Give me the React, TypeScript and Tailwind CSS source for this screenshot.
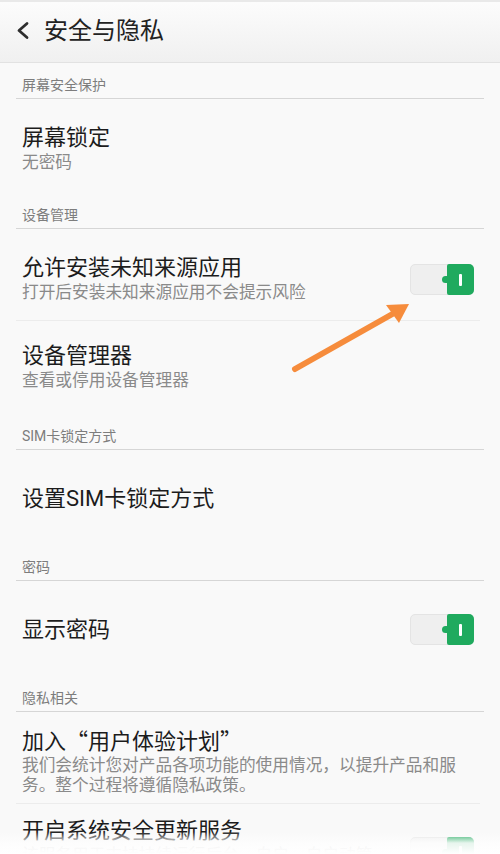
import React from 'react';

// Settings page: 安全与隐私

function Toggle() {
  return (
    <div className="relative w-[64px] h-[31px] rounded-[5px] bg-[#efefef] border border-[#e4e4e4] shrink-0">
      <div className="absolute right-[-1px] top-[-1px] bottom-[-1px] w-[27px] rounded-r-[5px] rounded-l-[2px] bg-[#1faa5e] flex items-center justify-center">
        <div className="w-[3px] h-[12px] bg-white rounded-[1px]" />
      </div>
      {/* little notch on the thumb */}
      <div className="absolute right-[23px] top-[11px] w-[8px] h-[7px] rounded-full bg-[#1faa5e]" />
    </div>
  );
}

function SectionLabel({ label }: { label: string }) {
  return (
    <div className="h-[36px] flex flex-col justify-end">
      <div className="px-[22px] pb-[3px] text-[14px] leading-[20px] text-[#7d7d7d]">{label}</div>
      <div className="mx-4 h-px bg-[#d6d6d6]" />
    </div>
  );
}

interface ItemProps {
  title: string;
  subtitle?: string;
  toggle?: boolean;
  divider?: boolean;
  className: string;
}

function SettingItem({ title, subtitle, toggle, divider, className }: ItemProps) {
  return (
    <>
      <div className={'pl-[22px] pr-[26px] flex items-center gap-4 ' + className}>
        <div className="flex-1 min-w-0">
          <div className="text-[22px] leading-[26px] text-[#1c1c1c]">{title}</div>
          {subtitle && (
            <div className="text-[16.7px] leading-[24px] text-[#8a8a8a]">{subtitle}</div>
          )}
        </div>
        {toggle && <Toggle />}
      </div>
      {divider && <div className="ml-4 mr-5 h-px bg-[#ececec]" />}
    </>
  );
}

export default function App() {
  return (
    <div className="relative w-[500px] h-[854px] overflow-hidden bg-[#f9f9f9] font-['Roboto','Noto_Sans_CJK_SC',sans-serif]">
      {/* Header */}
      <div className="h-[63px] border-t-2 border-[#e9e9e9] border-b border-b-[#e2e2e2] bg-linear-to-b from-[#fcfcfc] to-[#f0f0f0] flex items-center">
        <svg width="44" height="60" viewBox="0 0 44 60" className="shrink-0">
          <polyline points="27,21.5 19,28.5 27,35.5" fill="none" stroke="#2e2e2e" strokeWidth="2.8" strokeLinecap="round" strokeLinejoin="round" />
        </svg>
        <div className="text-[24px] leading-[30px] text-[#222] mt-[-2px]">安全与隐私</div>
      </div>

      <SectionLabel label="屏幕安全保护" />
      <SettingItem title="屏幕锁定" subtitle="无密码" className="min-h-[94px] pt-[20px] pb-[12px]" />

      <SectionLabel label="设备管理" />
      <SettingItem
        title="允许安装未知来源应用"
        subtitle="打开后安装未知来源应用不会提示风险"
        toggle
        divider
        className="min-h-[91px] pt-[20px] pb-[10px]"
      />
      <SettingItem title="设备管理器" subtitle="查看或停用设备管理器" className="min-h-[93px] pt-[14px] pb-[14px]" />

      <SectionLabel label="SIM卡锁定方式" />
      <SettingItem title="设置SIM卡锁定方式" className="min-h-[95px] pt-[16px] pb-[14px]" />

      <SectionLabel label="密码" />
      <SettingItem title="显示密码" toggle className="min-h-[95px] pt-[16px] pb-[14px]" />

      <SectionLabel label="隐私相关" />
      <div className="pt-[14px] pb-[9px] pl-[22px]">
        <div className="text-[22px] leading-[26px] text-[#1c1c1c] font-['Noto_Sans_CJK_SC',sans-serif]">
          加入“用户体验计划”
        </div>
        <div className="mt-[2px] text-[16.7px] leading-[20px] text-[#8a8a8a] font-['Noto_Sans_CJK_SC',sans-serif]">
          我们会统计您对产品各项功能的使用情况，以提升产品和服
          <br />
          务。整个过程将遵循隐私政策。
        </div>
      </div>
      <div className="ml-4 mr-5 h-px bg-[#ececec]" />
      <div className="pt-[14px] pb-[12px] pl-[22px] pr-[26px] flex items-center gap-4">
        <div className="flex-1 min-w-0">
          <div className="text-[22px] leading-[26px] text-[#1c1c1c]">开启系统安全更新服务</div>
          <div className="mt-[2px] text-[16.7px] leading-[20px] text-[#8a8a8a]">
            该服务用于支持持续运行后台，自启、自启动管理，若关闭将无法及时获取安全更新。
          </div>
        </div>
        <Toggle />
      </div>

      {/* bottom fade */}
      <div className="absolute left-0 right-0 bottom-0 h-[22px] bg-linear-to-b from-[#fafafa]/0 via-[#fdfdfd]/90 to-[#ffffff]" />

      {/* annotation arrow */}
      <svg className="absolute left-0 top-0 pointer-events-none" width="500" height="854" viewBox="0 0 500 854">
        <line x1="295" y1="369" x2="396" y2="312" stroke="#f68c3c" strokeWidth="6" strokeLinecap="round" />
        <polygon points="409,304 386,305 399,323" fill="#f68c3c" />
      </svg>
    </div>
  );
}
